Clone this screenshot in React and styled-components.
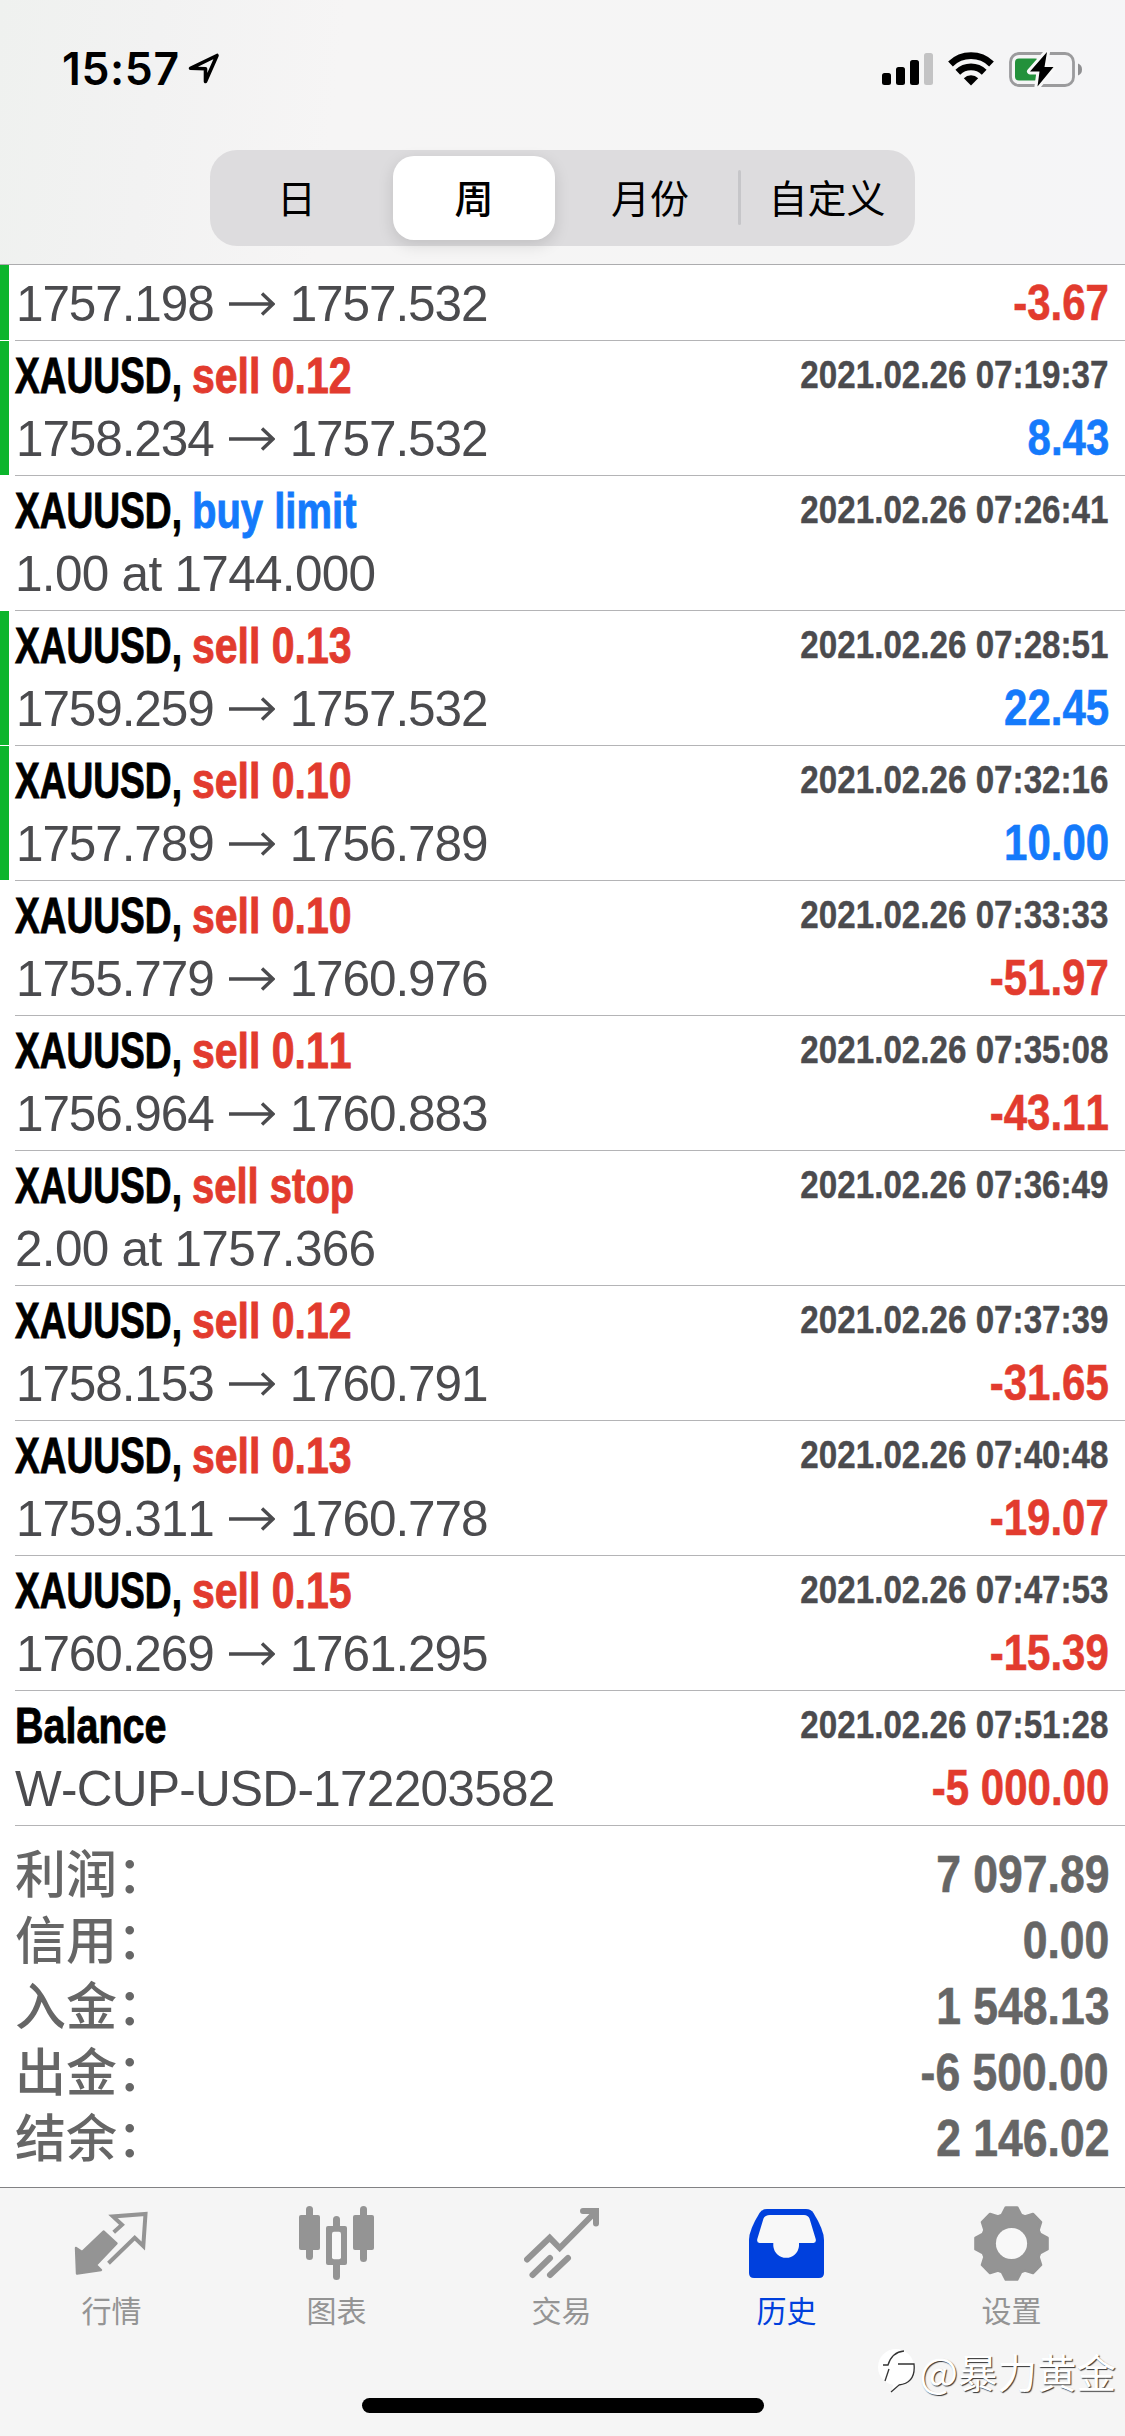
import React from "react";
import styled, { createGlobalStyle } from "styled-components";

const red = "#e23b2e";
const blue = "#147afb";
const darkGray = "#4b4b4e";
const midGray = "#666666";
const tabGray = "#949494";
const tabBlue = "#0040dd";
const latin = `"Liberation Sans", Arial, sans-serif`;
const cjk = `"Noto Sans CJK SC", sans-serif`;

const GlobalStyle = createGlobalStyle`
  * {
    box-sizing: border-box;
  }
  body {
    margin: 0;
    background: #fff;
    font-family: ${latin};
    font-kerning: none;
  }
`;

const Screen = styled.div`
  position: relative;
  width: 1125px;
  height: 2436px;
  display: flex;
  flex-direction: column;
  overflow: hidden;
  background: #fff;
`;

/* header */

const Header = styled.header`
  height: 265px;
  flex: none;
  border-bottom: 1px solid #acacae;
  background: linear-gradient(
    97deg,
    #eff1ef 0%,
    #f2f2f2 14%,
    #f6f5f5 30%,
    #f5f5f5 75%,
    #f5f5f7 100%
  );
`;

const StatusBar = styled.div`
  height: 150px;
  display: flex;
  justify-content: space-between;
  padding: 39px 42px 0 62px;
`;

const StatusGroup = styled.div`
  height: 60px;
  display: flex;
  align-items: center;
  gap: ${({ $gap }) => $gap}px;
`;

const Clock = styled.span`
  width: 117px;
  font-family: Inter, sans-serif;
  font-weight: 600;
  font-size: 44.5px;
  line-height: 60px;
  letter-spacing: 0.6px;
  white-space: nowrap;
`;

const Segments = styled.div`
  width: 705px;
  height: 96px;
  margin: 0 0 0 210px;
  padding: 6px 0;
  display: flex;
  border-radius: 27px;
  background: #dddcde;
`;

const Segment = styled.div`
  width: ${({ $active }) => ($active ? 162 : 176)}px;
  margin: ${({ $active }) => ($active ? "0 7px" : "0")};
  padding-right: ${({ $first }) => ($first ? 3 : 0)}px;
  flex: none;
  display: flex;
  justify-content: center;
  border-radius: 21px;
  background: ${({ $active }) => ($active ? "#fff" : "transparent")};
  box-shadow: ${({ $active }) =>
    $active ? "0 5px 16px rgba(0, 0, 0, 0.13)" : "none"};
  font-family: ${cjk};
  font-size: 39px;
  font-weight: ${({ $active }) => ($active ? 500 : 400)};
  line-height: 80px;
`;

const SegmentDivider = styled.i`
  width: 3px;
  height: 55px;
  margin: 14px -2px 0 0;
  flex: none;
  border-radius: 2px;
  background: #c6c6c9;
`;

/* deals */

const List = styled.main`
  flex: none;
`;

const Row = styled.section`
  height: ${({ $clipped }) => ($clipped ? 76 : 135)}px;
  display: flex;
  border-left: 9px solid transparent;
  border-image: ${({ $closed }) =>
    $closed
      ? "linear-gradient(#0cb52c calc(100% - 1px), transparent 0) 0 0 0 9"
      : "none"};
  padding-left: 6px;
`;

const RowBody = styled.div`
  flex: 1;
  display: flex;
  flex-direction: column;
  justify-content: flex-end;
  padding: 0 16px 7px 0;
  border-bottom: 1px solid #b4b4b6;
`;

const Line = styled.div`
  height: ${({ $h }) => $h}px;
  display: flex;
  justify-content: space-between;
  line-height: ${({ $h }) => $h}px;
  white-space: nowrap;
`;

// Liberation has no condensed face, so bold text is squeezed horizontally
const Condensed = styled.span`
  display: inline-block;
  font-weight: 700;
  transform: scaleX(${({ $scale }) => $scale});
  transform-origin: ${({ $right }) => ($right ? "100%" : "0")} 50%;
`;

const Heading = styled.div`
  display: flex;
  margin-top: -1px;
  font-size: 50px;
  -webkit-text-stroke: 0.9px currentColor;
`;

const Title = styled(Condensed)`
  width: 177px;
  color: #000;
`;

const Action = styled(Condensed)`
  color: ${({ $color }) => $color};
`;

const Time = styled(Condensed)`
  margin-top: -3px;
  font-size: 38.5px;
  color: ${darkGray};
  -webkit-text-stroke: 0.4px currentColor;
`;

const Detail = styled.span`
  display: flex;
  align-items: center;
  padding-left: ${({ $inset }) => $inset}px;
  font-size: 49.5px;
  letter-spacing: ${({ $spacing }) => $spacing}px;
  color: ${darkGray};
`;

const ArrowSvg = styled.svg`
  width: 46px;
  height: 24px;
  margin: 0 15px 0 15px;
  fill: none;
  stroke: ${darkGray};
  stroke-width: 3.4px;
`;

const Profit = styled(Condensed)`
  font-size: 50px;
  color: ${({ $color }) => $color};
  -webkit-text-stroke: 0.6px currentColor;
`;

/* totals */

const Totals = styled.section`
  height: 361px;
  flex: none;
  padding: 15px 16px 0 15px;
`;

const TotalLabel = styled.span`
  margin-top: -3px;
  font-family: ${cjk};
  font-size: 51px;
  font-weight: 500;
  color: ${midGray};
`;

const TotalValue = styled(Condensed)`
  font-size: 51.5px;
  color: ${midGray};
  -webkit-text-stroke: 0.6px currentColor;
`;

/* tab bar */

const TabBar = styled.nav`
  height: 250px;
  flex: none;
  display: flex;
  flex-direction: column;
  border-top: 1px solid #828284;
  background: #f5f5f5;
`;

const Tabs = styled.div`
  height: 210px;
  display: flex;
  padding-top: 18px;
  margin-left: -1px;
`;

const Tab = styled.div`
  width: 225px;
  display: flex;
  flex-direction: column;
  align-items: center;
  color: ${({ $active }) => ($active ? tabBlue : tabGray)};
`;

const TabIcon = styled.svg`
  width: 75px;
  height: 75px;
  fill: currentColor;
`;

const TabLabel = styled.span`
  margin-top: 6px;
  font-family: ${cjk};
  font-size: 30px;
  line-height: 44px;
`;

const HomeIndicator = styled.div`
  width: 402px;
  height: 15px;
  margin: 0 auto;
  border-radius: 8px;
  background: #000;
`;

const Watermark = styled.div`
  position: absolute;
  right: 9px;
  top: 2342px;
  height: 56px;
  display: flex;
  align-items: center;
  gap: 3px;
  font-family: ${cjk};
  font-size: 39.5px;
  line-height: 56px;
  color: #fff;
  text-shadow: 1px 1px 1px #333;
`;

const AtSign = styled.span`
  font-size: 41px;
`;

const segments = ["日", "周", "月份", "自定义"];

const deals = [
  { from: "1757.198", to: "1757.532", profit: "-3.67", closed: true },
  { type: "sell 0.12", time: "07:19:37", from: "1758.234", to: "1757.532", profit: "8.43", closed: true },
  { type: "buy limit", time: "07:26:41", note: "1.00 at 1744.000" },
  { type: "sell 0.13", time: "07:28:51", from: "1759.259", to: "1757.532", profit: "22.45", closed: true },
  { type: "sell 0.10", time: "07:32:16", from: "1757.789", to: "1756.789", profit: "10.00", closed: true },
  { type: "sell 0.10", time: "07:33:33", from: "1755.779", to: "1760.976", profit: "-51.97" },
  { type: "sell 0.11", time: "07:35:08", from: "1756.964", to: "1760.883", profit: "-43.11" },
  { type: "sell stop", time: "07:36:49", note: "2.00 at 1757.366" },
  { type: "sell 0.12", time: "07:37:39", from: "1758.153", to: "1760.791", profit: "-31.65" },
  { type: "sell 0.13", time: "07:40:48", from: "1759.311", to: "1760.778", profit: "-19.07" },
  { type: "sell 0.15", time: "07:47:53", from: "1760.269", to: "1761.295", profit: "-15.39" },
  { title: "Balance", time: "07:51:28", note: "W-CUP-USD-172203582", profit: "-5 000.00" },
];

const totals = [
  ["利润：", "7 097.89"],
  ["信用：", "0.00"],
  ["入金：", "1 548.13"],
  ["出金：", "-6 500.00"],
  ["结余：", "2 146.02"],
];

const gearPoints = Array.from({ length: 8 })
  .flatMap((_, i) =>
    [
      [30.2, -18.5],
      [36.5, -9],
      [36.5, 9],
      [30.2, 18.5],
    ].map(([r, offset]) => {
      const a = ((i * 45 + offset) * Math.PI) / 180;
      return `${37.5 + r * Math.sin(a)},${37.5 - r * Math.cos(a)}`;
    })
  )
  .join(" ");

const QuotesIcon = () => (
  <TabIcon viewBox="0 0 75 75">
    <path
      d="M2 42L8 46L29.5 25.5L42.5 37.5L22 59L27 64L3 67.5Z"
      stroke="currentColor"
      strokeWidth="2.4"
      strokeLinejoin="round"
    />
    <path
      d="M39.7 26.3L48 18.7L39 10.5L71.5 8L69.3 40L60.7 31.7L34.5 57.2"
      fill="none"
      stroke="currentColor"
      strokeWidth="4"
    />
  </TabIcon>
);

const ChartIcon = () => (
  <TabIcon viewBox="0 0 75 75">
    <rect x="7" y="0" width="7" height="54" rx="3.5" />
    <rect x="0" y="9" width="21" height="35" rx="2" />
    <rect x="34" y="10" width="7" height="64" rx="3.5" />
    <rect x="27" y="20" width="21" height="39" rx="2" />
    <rect x="33" y="25.7" width="9" height="27.5" rx="2" fill="#f8f8f8" />
    <rect x="61" y="0" width="7" height="56" rx="3.5" />
    <rect x="54" y="9" width="21" height="35" rx="2" />
  </TabIcon>
);

const TradeIcon = () => (
  <TabIcon viewBox="0 0 75 75">
    <g fill="none" stroke="currentColor" strokeWidth="6" strokeLinecap="round">
      <path d="M3 53.5L25.7 31.8L35.7 42L71 6.5" />
      <path d="M59 5H72V17.5" />
      <path d="M8.5 69L26 52M26 69L44 52" />
    </g>
  </TabIcon>
);

const HistoryIcon = () => (
  <TabIcon viewBox="0 0 75 75">
    <path d="M18 3H57Q62 3 64.5 7Q75 24 75 34V67Q75 72 70 72H5Q0 72 0 67V34Q0 24 10.5 7Q13 3 18 3Z" />
    <path
      d="M21 9H55Q59 9 60.5 12.5L66.7 33Q67.5 37 64.5 37H50V40A12.9 13 0 0 1 24.3 40V37H10.5Q7.5 37 8.3 33L14.5 12.5Q16 9 21 9Z"
      fill="#f8f8f8"
    />
  </TabIcon>
);

const SettingsIcon = () => (
  <TabIcon viewBox="0 0 75 75">
    <polygon
      points={gearPoints}
      stroke="currentColor"
      strokeWidth="2.5"
      strokeLinejoin="round"
    />
    <circle cx="37.5" cy="37.5" r="15.6" fill="#f8f8f8" />
  </TabIcon>
);

const tabs = [
  { label: "行情", Icon: QuotesIcon },
  { label: "图表", Icon: ChartIcon },
  { label: "交易", Icon: TradeIcon },
  { label: "历史", Icon: HistoryIcon, active: true },
  { label: "设置", Icon: SettingsIcon },
];

const LocationIcon = () => (
  <svg width="32" height="32" viewBox="0 0 32 32">
    <path
      d="M2.5 15.3L29 2.5L17.5 28.5V15.8Z"
      fill="none"
      stroke="#000"
      strokeWidth="3.6"
      strokeLinejoin="round"
    />
  </svg>
);

const SignalIcon = () => (
  <svg width="51" height="34" viewBox="0 0 51 34">
    <rect x="0" y="21" width="9" height="12" rx="2.5" />
    <rect x="14" y="15" width="9" height="18" rx="2.5" />
    <rect x="28" y="8" width="9" height="25" rx="2.5" />
    <rect x="42" y="1" width="9" height="32" rx="2.5" fill="#c3c3c4" />
  </svg>
);

const WifiIcon = () => (
  <svg width="46" height="34" viewBox="0 0 46 34">
    <g fill="none" stroke="#000" strokeWidth="6.8">
      <path d="M2.5 12A29.5 29.5 0 0 1 43.5 12" />
      <path d="M9.8 20.2A19 19 0 0 1 36.2 20.2" />
    </g>
    <path d="M23 33.5L15.8 26.3A10.2 10.2 0 0 1 30.2 26.3Z" />
  </svg>
);

const BatteryIcon = () => (
  <svg width="74" height="36" viewBox="0 0 74 36">
    <rect x="1.5" y="2.5" width="63" height="32" rx="8.5" fill="none" stroke="#9b9b9d" strokeWidth="2.8" />
    <path d="M69 12.5Q73 14 73 18.5Q73 23 69 24.5Z" fill="#8f8f91" />
    <rect x="6" y="7.5" width="24" height="22" rx="4" fill="#23913b" />
    <path
      d="M38 1L21 20.5H30.5L28.5 35.5L44.5 16H35.5Z"
      stroke="#f8f8f8"
      strokeWidth="6"
      strokeLinejoin="round"
      paintOrder="stroke"
    />
  </svg>
);

const WatermarkLogo = () => (
  <svg width="38" height="46" viewBox="0 0 38 46">
    <circle cx="18" cy="20" r="18" fill="#fff" />
    <path d="M16 36L13 45L27 35Z" fill="#fff" />
    <g fill="none" stroke="#333" strokeWidth="1.3">
      <path d="M5 18H10Q14 5 26 4M20 17H36Q38 36 21 38L13 45" />
      <path d="M11 22L7 34" />
    </g>
  </svg>
);

const Deal = ({ title = "XAUUSD,", type, time, from, to, note, profit, closed }) => (
  <Row $closed={closed} $clipped={!time}>
    <RowBody>
      {time && (
        <Line $h={63}>
          <Heading>
            <Title $scale={title === "Balance" ? 0.79 : 0.742}>{title}</Title>
            {type && (
              <Action
                $scale={/\d/.test(type) ? 0.82 : 0.8}
                $color={type.startsWith("buy") ? blue : red}
              >
                {type}
              </Action>
            )}
          </Heading>
          <Time $right $scale={0.862}>
            2021.02.26 {time}
          </Time>
        </Line>
      )}
      <Line $h={59}>
        {note ? (
          <Detail $spacing={-0.7} $inset={0}>
            {note}
          </Detail>
        ) : (
          <Detail $spacing={-1.1} $inset={1}>
            {from}
            <ArrowSvg viewBox="0 0 46 24">
              <path d="M0 12H44M33 1.5L44 12L33 22.5" />
            </ArrowSvg>
            {to}
          </Detail>
        )}
        {profit && (
          <Profit $right $scale={0.84} $color={profit.startsWith("-") ? red : blue}>
            {profit}
          </Profit>
        )}
      </Line>
    </RowBody>
  </Row>
);

const App = () => {
  return (
    <>
      <GlobalStyle />
      <Screen>
        <Header>
          <StatusBar>
            <StatusGroup $gap={9}>
              <Clock>15:57</Clock>
              <LocationIcon />
            </StatusGroup>
            <StatusGroup $gap={15}>
              <SignalIcon />
              <WifiIcon />
              <BatteryIcon />
            </StatusGroup>
          </StatusBar>
          <Segments>
            {segments.map((label, i) => (
              <React.Fragment key={label}>
                {i === 3 && <SegmentDivider />}
                <Segment $active={i === 1} $first={i === 0}>
                  {label}
                </Segment>
              </React.Fragment>
            ))}
          </Segments>
        </Header>

        <List>
          {deals.map((deal, i) => (
            <Deal key={i} {...deal} />
          ))}
        </List>

        <Totals>
          {totals.map(([label, value]) => (
            <Line key={label} $h={66}>
              <TotalLabel>{label}</TotalLabel>
              <TotalValue $right $scale={0.864}>
                {value}
              </TotalValue>
            </Line>
          ))}
        </Totals>

        <TabBar>
          <Tabs>
            {tabs.map(({ label, Icon, active }) => (
              <Tab key={label} $active={active}>
                <Icon />
                <TabLabel>{label}</TabLabel>
              </Tab>
            ))}
          </Tabs>
          <HomeIndicator />
        </TabBar>

        <Watermark>
          <WatermarkLogo />
          <span>
            <AtSign>@</AtSign>暴力黄金
          </span>
        </Watermark>
      </Screen>
    </>
  );
};

export default App;
